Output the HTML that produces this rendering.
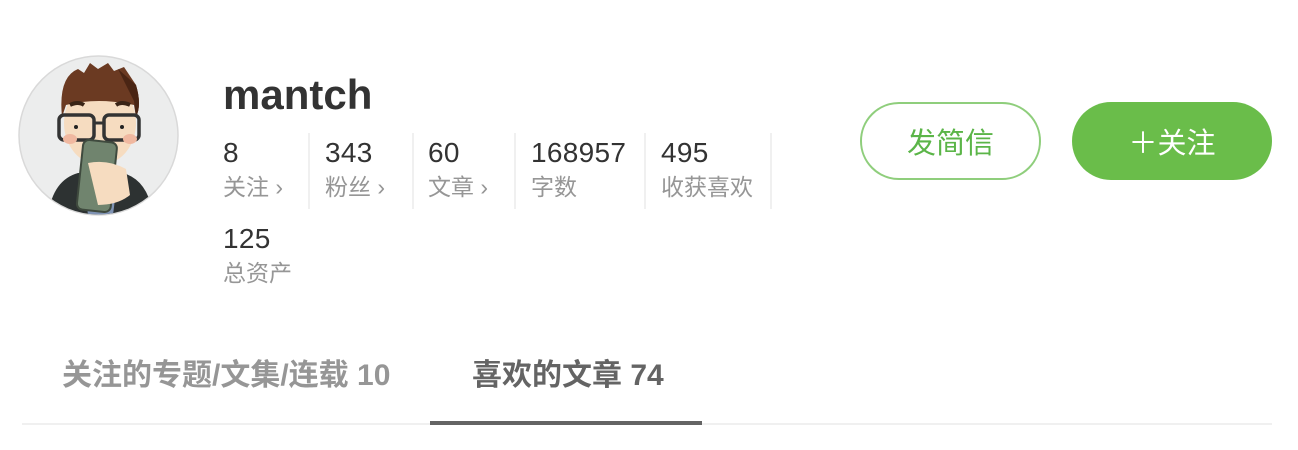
<!DOCTYPE html>
<html><head><meta charset="utf-8"><style>
*{margin:0;padding:0;box-sizing:border-box}
body{width:1298px;height:450px;background:#fff;font-family:"Liberation Sans","Noto Sans CJK SC",sans-serif;position:relative;overflow:hidden;color:#333}
.abs{position:absolute;white-space:nowrap}
.name{left:223px;top:70px;font-size:42px;font-weight:bold;color:#333;line-height:50px}
.num{font-size:28px;letter-spacing:0.3px;color:#333;line-height:30px}
.lab{font-size:23px;color:#969696;line-height:28px}
.div{position:absolute;top:133px;width:2px;height:76px;background:#f0f0f0}
.btn{position:absolute;top:102px;height:78px;border-radius:39px;font-size:29px;display:flex;align-items:center;justify-content:center}
.tab{font-size:30px;font-weight:bold;line-height:34px}
</style></head><body>
<svg class="abs" style="left:18px;top:55px" width="161" height="161" viewBox="0 0 161 161">
<defs><clipPath id="c"><circle cx="80.5" cy="80.5" r="79"/></clipPath></defs>
<circle cx="80.5" cy="80.5" r="79.5" fill="#eceded" stroke="#d9d9d9" stroke-width="1.5"/>
<g clip-path="url(#c)">
<path d="M30 160 Q35 125 60 118 L105 118 Q130 125 135 160Z" fill="#2d3232"/>
<path d="M65 120 L100 120 L95 160 L70 160Z" fill="#7f93b4"/>
<ellipse cx="82" cy="68" rx="36" ry="42" fill="#f6dcc0"/>
<path d="M44 62 Q40 22 60 14 L66 18 L72 8 L80 14 L90 8 L96 16 L106 12 L118 30 Q124 50 118 62 L116 50 Q80 42 48 50Z" fill="#6b3a22"/>
<path d="M100 14 L118 30 Q124 50 118 62 L116 46Z" fill="#4a2514"/>
<rect x="41" y="60" width="35" height="25" rx="5" fill="none" stroke="#333" stroke-width="3.5"/>
<rect x="86" y="60" width="35" height="25" rx="5" fill="none" stroke="#333" stroke-width="3.5"/>
<path d="M76 68 L86 68" stroke="#333" stroke-width="3"/>
<path d="M52 50 Q60 46 66 50 M98 50 Q104 46 112 50" stroke="#3a2416" stroke-width="4" fill="none"/>
<circle cx="58" cy="72" r="2" fill="#222"/><circle cx="104" cy="72" r="2" fill="#222"/>
<ellipse cx="52" cy="84" rx="7" ry="5" fill="#f0b8a0"/><ellipse cx="112" cy="84" rx="7" ry="5" fill="#f0b8a0"/>
<rect x="62" y="86" width="34" height="70" rx="6" fill="#70846e" stroke="#3f4a3e" stroke-width="2" transform="rotate(6 79 120)"/>
<path d="M70 108 Q90 104 108 114 L112 140 Q100 150 80 150 Z" fill="#f6dcc0"/>
</g></svg>
<div class="abs name">mantch</div>

<div class="abs num" style="left:223px;top:138px">8</div><div class="abs lab" style="left:223px;top:173px">关注 ›</div>
<div class="div" style="left:308px"></div>
<div class="abs num" style="left:325px;top:138px">343</div><div class="abs lab" style="left:325px;top:173px">粉丝 ›</div>
<div class="div" style="left:412px"></div>
<div class="abs num" style="left:428px;top:138px">60</div><div class="abs lab" style="left:428px;top:173px">文章 ›</div>
<div class="div" style="left:514px"></div>
<div class="abs num" style="left:531px;top:138px">168957</div><div class="abs lab" style="left:531px;top:173px">字数</div>
<div class="div" style="left:644px"></div>
<div class="abs num" style="left:661px;top:138px">495</div><div class="abs lab" style="left:661px;top:173px">收获喜欢</div>
<div class="div" style="left:770px"></div>
<div class="abs num" style="left:223px;top:224px">125</div><div class="abs lab" style="left:223px;top:259px">总资产</div>

<div class="btn" style="left:860px;width:181px;border:2px solid #8fce7c;color:#5bb548">发简信</div>
<div class="btn" style="left:1072px;width:200px;background:#6abd4a;color:#fff">＋关注</div>

<div class="abs tab" style="left:62px;top:359px;color:#969696">关注的专题/文集/连载 10</div>
<div class="abs tab" style="left:472px;top:359px;color:#646464">喜欢的文章 74</div>
<div class="abs" style="left:22px;top:423px;width:1250px;height:2px;background:#f0f0f0"></div>
<div class="abs" style="left:430px;top:421px;width:272px;height:4px;background:#646464"></div>
</body></html>
